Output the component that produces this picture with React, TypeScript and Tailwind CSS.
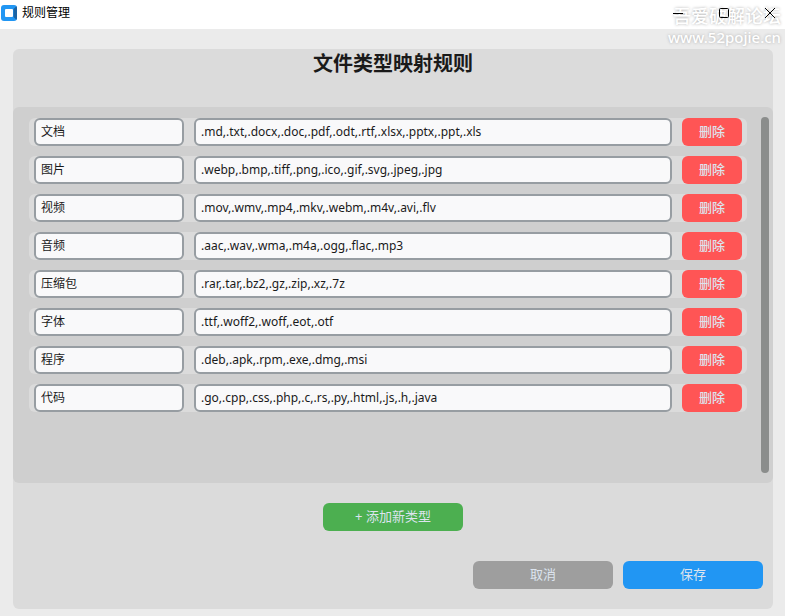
import React, { useState } from 'react';

type Rule = { name: string; extensions: string };

const initialRules: Rule[] = [
  { name: '文档', extensions: '.md,.txt,.docx,.doc,.pdf,.odt,.rtf,.xlsx,.pptx,.ppt,.xls' },
  { name: '图片', extensions: '.webp,.bmp,.tiff,.png,.ico,.gif,.svg,.jpeg,.jpg' },
  { name: '视频', extensions: '.mov,.wmv,.mp4,.mkv,.webm,.m4v,.avi,.flv' },
  { name: '音频', extensions: '.aac,.wav,.wma,.m4a,.ogg,.flac,.mp3' },
  { name: '压缩包', extensions: '.rar,.tar,.bz2,.gz,.zip,.xz,.7z' },
  { name: '字体', extensions: '.ttf,.woff2,.woff,.eot,.otf' },
  { name: '程序', extensions: '.deb,.apk,.rpm,.exe,.dmg,.msi' },
  { name: '代码', extensions: '.go,.cpp,.css,.php,.c,.rs,.py,.html,.js,.h,.java' },
];

const inputClass =
  'h-7 rounded-md border-2 border-[#979da2] bg-[#f9f9fa] px-[5px] pb-0.5 text-xs text-[#1a1a1a] outline-none';

const AppIcon = () => (
  <svg width="16" height="16" viewBox="0 0 16 16" aria-hidden="true">
    <rect width="16" height="16" rx="3" fill="#2196f3" />
    <path d="M12.500 4L15.300 1.200A3 3 0 0 1 16 3v10a3 3 0 0 1-.7 1.800L12.500 12z" fill="#1c64a4" />
    <rect x="4" y="4" width="8" height="8" rx="1" fill="#fff" />
  </svg>
);

const TitleBar = () => (
  <header className="flex h-[29px] items-start justify-between bg-white pl-px">
    <div className="flex h-[26px] items-center gap-[5px]">
      <AppIcon />
      <span className="text-xs text-black">规则管理</span>
    </div>
    <div className="relative z-10 flex">
      <button aria-label="最小化" className="flex h-[26px] w-[46px] items-center justify-center">
        <svg width="10" height="10" viewBox="0 0 10 10" stroke="#000" fill="none">
          <path d="M0 5.5h10" />
        </svg>
      </button>
      <button aria-label="最大化" className="flex h-[26px] w-[46px] items-center justify-center">
        <svg width="10" height="10" viewBox="0 0 10 10" stroke="#000" fill="none">
          <rect x="0.5" y="0.5" width="9" height="9" rx="1" />
        </svg>
      </button>
      <button aria-label="关闭" className="flex h-[26px] w-[38px] items-center justify-end pr-[10px]">
        <svg width="10" height="10" viewBox="0 0 10 10" stroke="#000" fill="none">
          <path d="M0 0l10 10M10 0l-10 10" />
        </svg>
      </button>
    </div>
  </header>
);

const RuleRow: React.FC<{
  rule: Rule;
  onChange: (rule: Rule) => void;
  onDelete: () => void;
}> = ({ rule, onChange, onDelete }) => (
  <li className="flex gap-[10px] rounded-md bg-[#dbdbdb] px-[5px]">
    <input
      aria-label="类型名称"
      className={`${inputClass} w-[150px]`}
      value={rule.name}
      onChange={(e) => onChange({ ...rule, name: e.target.value })}
    />
    <input
      aria-label="扩展名"
      className={`${inputClass} min-w-0 flex-1`}
      value={rule.extensions}
      onChange={(e) => onChange({ ...rule, extensions: e.target.value })}
    />
    <button
      className="h-7 w-[60px] rounded-md bg-[#ff5555] text-[13px] font-medium text-[#dce4ee]"
      onClick={onDelete}
    >
      删除
    </button>
  </li>
);

const Watermark = () => (
  <div className="pointer-events-none absolute top-1 right-1 text-right font-medium text-white [text-shadow:0_0_3px_#aaa]">
    <div className="text-lg leading-[25px]">吾爱破解论坛</div>
    <div className="text-[15px] leading-4">www.52pojie.cn</div>
  </div>
);

export default function App() {
  const [rules, setRules] = useState(initialRules);

  const updateRule = (idx: number, rule: Rule) =>
    setRules(rules.map((r, i) => (i === idx ? rule : r)));

  return (
    <div className="relative flex min-h-screen flex-col bg-[#ebebeb] font-['Noto_Sans','Noto_Sans_CJK_SC',sans-serif]">
      <TitleBar />

      <main className="flex flex-1 flex-col pt-5 pr-3 pb-[7px] pl-[13px]">
        <div className="flex flex-1 flex-col rounded-md bg-[#dbdbdb]">
          <h1 className="h-[58px] text-center text-xl leading-[30px] font-bold text-[#1a1a1a]">
            文件类型映射规则
          </h1>

          {/* Rule list */}
          <section className="flex flex-1 rounded-md bg-[#cfcfcf] py-[10px] pr-1 pl-4">
            <ul className="flex flex-1 flex-col gap-[10px] pt-px">
              {rules.map((rule, idx) => (
                <RuleRow
                  key={idx}
                  rule={rule}
                  onChange={(r) => updateRule(idx, r)}
                  onDelete={() => setRules(rules.filter((_, i) => i !== idx))}
                />
              ))}
            </ul>
            <div className="ml-[14px] w-2 rounded-full bg-[#8b8d8c]" />
          </section>

          <div className="flex justify-center pt-5">
            <button
              className="h-7 w-[140px] rounded-md bg-[#4caf50] text-[13px] text-[#dce4ee]"
              onClick={() => setRules([...rules, { name: '', extensions: '' }])}
            >
              + 添加新类型
            </button>
          </div>

          <div className="flex justify-end gap-[10px] px-[10px] pt-[30px] pb-5">
            <button className="h-7 w-[140px] rounded-md bg-[#9e9e9e] text-[13px] text-[#dce4ee]">
              取消
            </button>
            <button className="h-7 w-[140px] rounded-md bg-[#2196f3] text-[13px] text-[#dce4ee]">
              保存
            </button>
          </div>
        </div>
      </main>

      <Watermark />
    </div>
  );
}
